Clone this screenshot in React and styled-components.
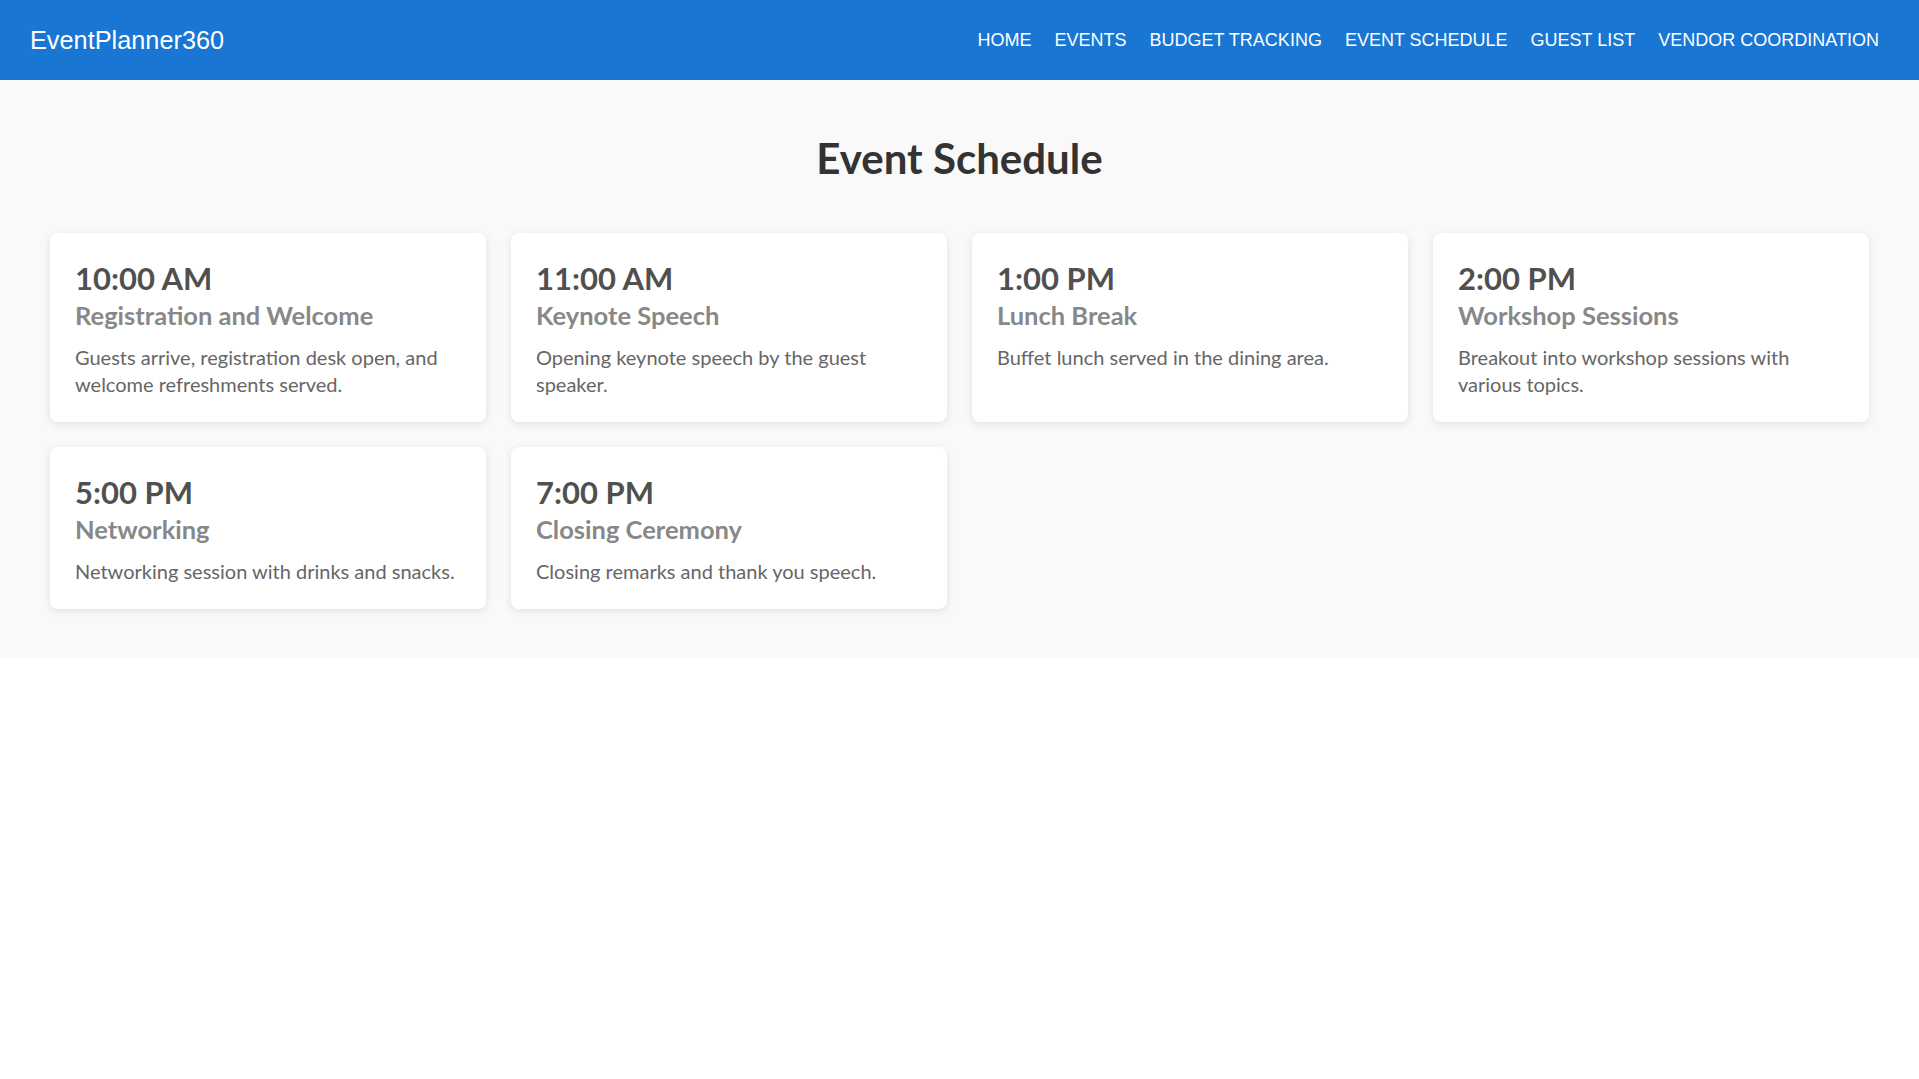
import React from "react";
import styled, { createGlobalStyle } from "styled-components";

const GlobalStyle = createGlobalStyle`
  html, body {
    margin: 0;
    padding: 0;
    background: #ffffff;
  }
  body {
    font-family: Lato, "Open Sans", sans-serif;
  }
  * { box-sizing: border-box; }
`;

const Header = styled.header`
  height: 80px;
  background: #1976d2;
  display: flex;
  align-items: center;
  justify-content: space-between;
  padding: 0 40px 0 30px;
  font-family: "Liberation Sans", Arial, sans-serif;
  color: #ffffff;
`;

const Logo = styled.div`
  font-size: 25.3px;
  color: #ffffff;
`;

const Nav = styled.nav`
  display: flex;
  align-items: center;
  gap: 23px;
`;

const NavLink = styled.a`
  color: #ffffff;
  text-decoration: none;
  font-size: 18px;
  text-transform: uppercase;
`;

const Main = styled.main`
  background: #f9f9f9;
  padding: 50px 50px 49px;
`;

const Title = styled.h2`
  margin: 2px 0 48px;
  text-align: center;
  font-size: 42px;
  font-weight: 700;
  color: #333333;
  line-height: 53px;
`;

const Grid = styled.div`
  display: grid;
  grid-template-columns: repeat(4, 1fr);
  gap: 25px;
`;

const Card = styled.div`
  background: #ffffff;
  border-radius: 8px;
  box-shadow: 0 2px 8px rgba(0, 0, 0, 0.1);
  padding: 25px 25px 24px;
`;

const Time = styled.h3`
  margin: 0;
  font-size: 31px;
  font-weight: 700;
  color: #505050;
  line-height: 40px;
`;

const EventName = styled.h4`
  margin: 0;
  font-size: 25.5px;
  font-weight: 700;
  color: #888888;
  line-height: 34px;
`;

const Description = styled.p`
  margin: 12px 0 0;
  font-size: 20px;
  color: #666666;
  line-height: 27px;
`;

const links = ["Home", "Events", "Budget Tracking", "Event Schedule", "Guest List", "Vendor Coordination"];

const events = [
  { time: "10:00 AM", name: "Registration and Welcome", desc: "Guests arrive, registration desk open, and welcome refreshments served." },
  { time: "11:00 AM", name: "Keynote Speech", desc: "Opening keynote speech by the guest speaker." },
  { time: "1:00 PM", name: "Lunch Break", desc: "Buffet lunch served in the dining area." },
  { time: "2:00 PM", name: "Workshop Sessions", desc: "Breakout into workshop sessions with various topics." },
  { time: "5:00 PM", name: "Networking", desc: "Networking session with drinks and snacks." },
  { time: "7:00 PM", name: "Closing Ceremony", desc: "Closing remarks and thank you speech." },
];

export default function App() {
  return (
    <>
      <GlobalStyle />
      <Header>
        <Logo>EventPlanner360</Logo>
        <Nav>
          {links.map((l) => (
            <NavLink key={l} href="#">{l}</NavLink>
          ))}
        </Nav>
      </Header>
      <Main>
        <Title>Event Schedule</Title>
        <Grid>
          {events.map((e) => (
            <Card key={e.time}>
              <Time>{e.time}</Time>
              <EventName>{e.name}</EventName>
              <Description>{e.desc}</Description>
            </Card>
          ))}
        </Grid>
      </Main>
    </>
  );
}
